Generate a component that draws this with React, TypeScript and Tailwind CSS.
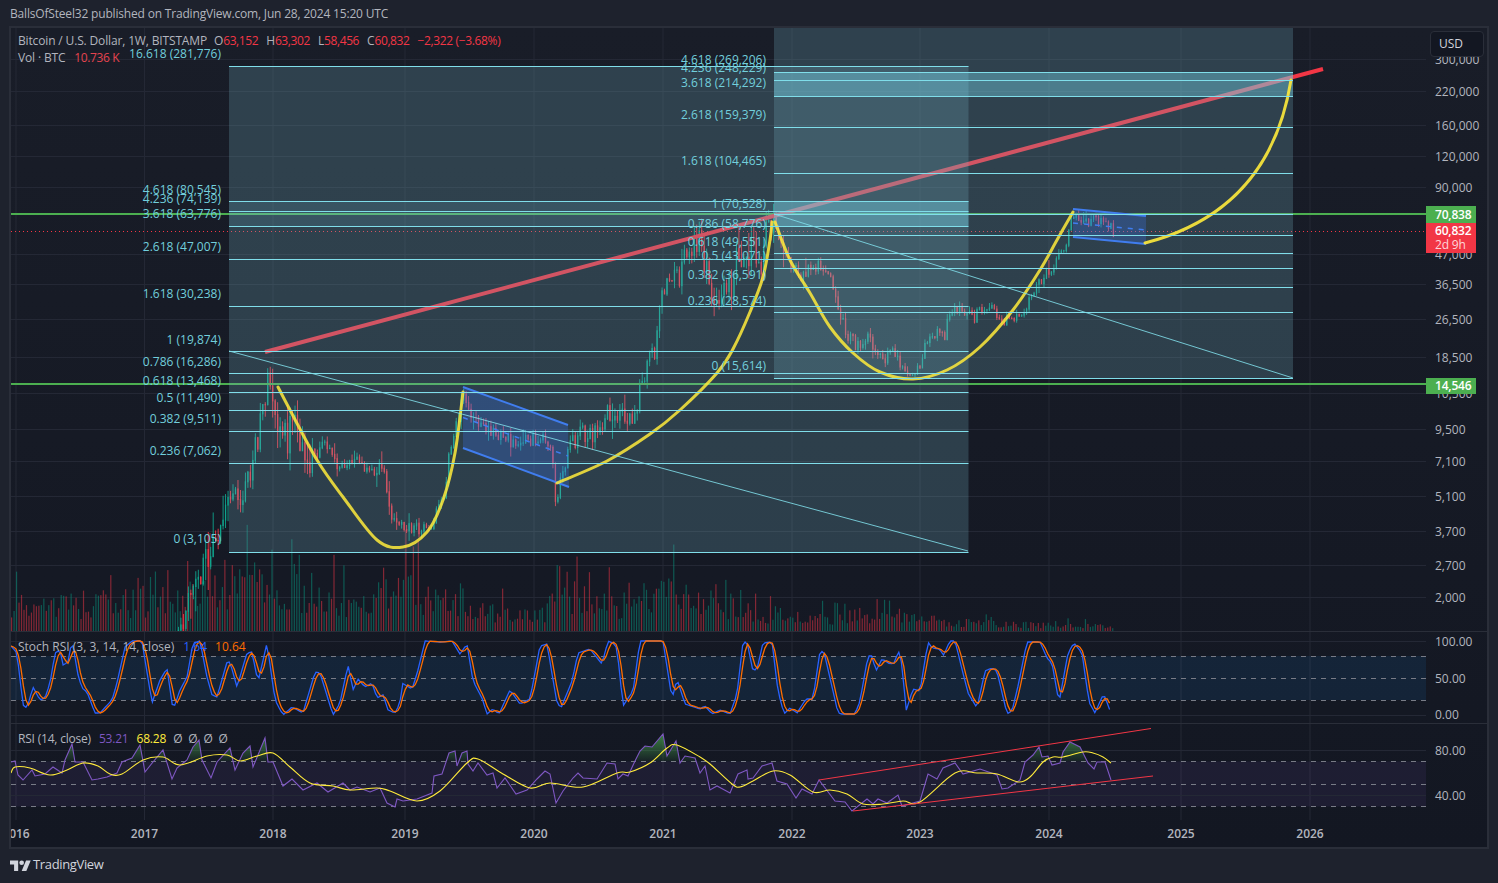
import React from "react";

type P = [number, number];

const pricePath: P[] = [
  [175,640],[190,600],[205,560],[223,515],[235,500],[243,490],[257,443],[263,407],[268,358],[273,400],[283,440],[292,425],[300,445],[310,460],[316,455],[325,438],[330,450],[340,470],[355,462],[365,468],[380,470],[385,478],[390,520],[400,525],[410,528],[420,528],[430,525],[437,510],[445,490],[448,457],[455,430],[463,395],[470,420],[480,425],[490,430],[500,435],[517,447],[533,437],[545,435],[552,450],[556,510],[560,480],[567,453],[577,433],[590,435],[600,430],[607,413],[615,410],[630,418],[636,405],[640,383],[645,375],[650,355],[655,352],[660,303],[665,285],[670,270],[675,280],[680,275],[685,250],[690,240],[700,240],[705,260],[713,293],[722,295],[732,290],[735,265],[745,250],[755,250],[760,265],[765,232],[772,222],[785,250],[795,270],[800,275],[810,268],[820,263],[830,275],[835,290],[838,310],[843,325],[848,335],[855,345],[867,333],[870,340],[875,350],[885,357],[895,352],[903,370],[913,372],[920,368],[925,340],[935,332],[945,335],[947,320],[955,307],[965,312],[975,318],[980,307],[990,306],[1000,320],[1015,318],[1025,310],[1030,295],[1037,285],[1047,270],[1055,265],[1062,250],[1068,235],[1072,212],[1080,225],[1090,220],[1100,220],[1110,225],[1113,232],
];

const stochBlue: P[] = [
  [11,646],[17,653],[23,705],[27,708],[33,687],[40,700],[45,698],[50,683],[55,653],[60,650],[63,665],[68,662],[72,640],[78,675],[82,688],[87,692],[95,713],[100,713],[112,700],[117,683],[125,647],[132,641],[142,641],[145,660],[152,703],[160,680],[167,668],[173,710],[180,690],[187,677],[193,643],[200,641],[207,677],[212,695],[217,697],[227,662],[230,662],[237,687],[247,653],[252,652],[258,682],[267,643],[275,700],[283,715],[292,707],[303,713],[315,672],[320,673],[333,715],[340,703],[348,665],[353,690],[358,679],[365,687],[372,683],[377,698],[383,695],[388,710],[395,713],[400,703],[402,683],[412,689],[417,674],[425,641],[440,642],[452,641],[460,654],[467,644],[473,681],[482,698],[487,714],[493,709],[499,714],[510,690],[520,704],[530,699],[540,646],[547,644],[557,703],[561,708],[572,681],[578,653],[590,649],[602,664],[608,641],[613,643],[617,648],[623,706],[633,691],[640,641],[663,641],[672,699],[677,679],[685,704],[700,709],[705,706],[712,714],[720,710],[730,714],[737,694],[743,642],[747,642],[753,671],[757,669],[763,643],[772,642],[778,691],[784,714],[790,708],[797,713],[806,699],[813,699],[820,651],[824,652],[838,713],[842,714],[855,714],[860,701],[868,656],[872,656],[876,671],[882,659],[890,664],[895,663],[898,649],[902,664],[906,711],[913,689],[920,691],[928,642],[932,648],[940,649],[943,656],[950,641],[955,641],[968,693],[977,708],[985,671],[992,668],[997,671],[1007,714],[1012,711],[1018,686],[1027,642],[1040,642],[1047,658],[1052,663],[1059,703],[1068,653],[1074,643],[1082,653],[1089,702],[1095,713],[1102,697],[1104,695],[1111,713],
];

const rsiLine: P[] = [
  [11,762],[15,761],[18,775],[23,780],[32,770],[35,776],[45,774],[53,767],[62,773],[65,760],[72,744],[75,762],[83,762],[92,780],[98,779],[107,777],[117,773],[122,762],[132,758],[140,745],[145,772],[153,762],[163,750],[172,779],[177,768],[187,760],[193,747],[199,740],[202,760],[211,778],[217,762],[230,748],[235,770],[243,753],[250,746],[253,767],[265,738],[268,762],[273,762],[283,786],[292,779],[303,790],[317,783],[328,792],[343,783],[350,790],[357,787],[370,792],[380,788],[387,803],[395,807],[397,799],[403,801],[417,799],[432,793],[434,776],[442,774],[449,753],[455,751],[457,766],[462,753],[467,751],[468,764],[473,771],[478,763],[487,775],[493,773],[497,788],[505,778],[516,794],[527,790],[537,779],[545,771],[550,774],[556,803],[563,791],[573,778],[578,773],[583,778],[597,779],[607,763],[615,764],[618,779],[623,774],[628,776],[635,761],[640,751],[645,746],[652,747],[663,734],[667,756],[676,741],[680,763],[685,756],[695,758],[700,773],[705,766],[710,790],[717,786],[730,793],[738,774],[747,770],[748,779],[753,778],[762,766],[772,763],[777,781],[787,784],[796,798],[802,789],[812,794],[819,780],[835,801],[845,802],[852,811],[867,799],[873,804],[878,799],[887,803],[898,795],[902,806],[920,801],[928,774],[937,779],[943,768],[955,763],[963,774],[980,769],[997,775],[1002,789],[1008,788],[1020,780],[1025,762],[1033,755],[1039,747],[1042,757],[1048,756],[1052,765],[1060,763],[1063,752],[1070,742],[1080,747],[1088,763],[1094,769],[1097,762],[1105,762],[1111,780],
];

const rsiMa: P[] = [
  [11,773],[15,767],[30,768],[50,775],[67,770],[83,763],[98,766],[110,774],[122,774],[143,760],[163,757],[180,765],[207,756],[227,755],[240,761],[257,756],[273,753],[290,767],[310,783],[333,786],[350,790],[377,788],[390,791],[417,801],[440,791],[467,763],[478,759],[503,774],[530,788],[550,783],[583,787],[617,773],[630,772],[650,763],[667,748],[677,745],[700,757],[710,764],[732,784],[740,787],[753,781],[773,771],[790,775],[813,792],[830,790],[847,794],[863,804],[883,804],[903,801],[920,802],[955,773],[977,773],[997,774],[1018,782],[1030,777],[1043,762],[1053,757],[1063,757],[1083,752],[1093,753],[1103,757],[1111,763],
];

const arc1: P[] = [[278,387],[290,410],[317,460],[343,497],[377,540],[403,547],[427,532],[443,500],[455,453],[463,392]];
const arc2: P[] = [[557,483],[607,461],[650,434],[680,410],[717,373],[733,349],[750,312],[763,277],[770,240],[772,222]];
const arc3: P[] = [[775,222],[790,260],[810,293],[830,327],[853,353],[880,372],[913,379],[947,370],[980,347],[1013,310],[1040,270],[1057,240],[1073,212]];

function smooth(points: P[]): string {
  let d = `M${points[0][0]} ${points[0][1]}`;
  for (let i = 0; i < points.length - 1; i++) {
    const p0 = points[Math.max(0, i - 1)];
    const p1 = points[i];
    const p2 = points[i + 1];
    const p3 = points[Math.min(points.length - 1, i + 2)];
    const c1x = p1[0] + (p2[0] - p0[0]) / 6;
    const c1y = p1[1] + (p2[1] - p0[1]) / 6;
    const c2x = p2[0] - (p3[0] - p1[0]) / 6;
    const c2y = p2[1] - (p3[1] - p1[1]) / 6;
    d += ` C${c1x.toFixed(1)} ${c1y.toFixed(1)} ${c2x.toFixed(1)} ${c2y.toFixed(1)} ${p2[0]} ${p2[1]}`;
  }
  return d;
}

function interp(points: P[], x: number): number {
  if (x <= points[0][0]) return points[0][1];
  for (let i = 0; i < points.length - 1; i++) {
    if (x <= points[i + 1][0]) {
      const t = (x - points[i][0]) / (points[i + 1][0] - points[i][0] || 1);
      return points[i][1] + t * (points[i + 1][1] - points[i][1]);
    }
  }
  return points[points.length - 1][1];
}

function poly(points: P[]): string {
  return points.map((p) => `${p[0].toFixed(1)},${p[1].toFixed(1)}`).join(" ");
}

function makeRng(seed: number) {
  let s = seed;
  return () => {
    s = (s * 16807) % 2147483647;
    return (s - 1) / 2147483646;
  };
}

const STEP = 2.48;

function candleVol(x: number): number {
  if (x < 262) return 26;
  if (x < 312) return 42;
  if (x < 385) return 13;
  if (x < 460) return 11;
  if (x < 570) return 14;
  if (x < 690) return 20;
  if (x < 772) return 32;
  if (x < 880) return 15;
  if (x < 1000) return 11;
  return 10;
}

function makeCandles() {
  const rnd = makeRng(20240628);
  const out: { x: number; top: number; bottom: number; o: number; c: number; up: boolean }[] = [];
  let prev = interp(pricePath, 175);
  for (let x = 178; x < 1114; x += STEP) {
    const vol = candleVol(x);
    const o = prev;
    const c = interp(pricePath, x) + (rnd() - 0.5) * vol;
    prev = c;
    const big = rnd() > 0.88 ? 2.2 : 1;
    out.push({
      x,
      o,
      c,
      up: c < o,
      top: Math.min(o, c) - rnd() * vol * 0.45 * big,
      bottom: Math.max(o, c) + rnd() * vol * 0.45 * big,
    });
  }
  return out;
}

const volEnv: P[] = [[11,50],[100,45],[180,60],[215,75],[265,85],[300,65],[350,50],[400,75],[440,55],[480,35],[545,30],[558,90],[580,50],[640,45],[663,70],[700,45],[780,25],[850,25],[900,22],[1000,12],[1113,8]];

function makeVolumes() {
  const rnd = makeRng(771133);
  const out: { x: number; h: number; up: boolean }[] = [];
  for (let x = 11; x < 1113; x += STEP) {
    const e = interp(volEnv, x);
    const r = rnd();
    const h = e * (0.25 + 0.6 * r + (rnd() > 0.88 ? 0.55 : 0));
    out.push({ x, h, up: rnd() > 0.48 });
  }
  return out;
}

function weekly(points: P[]): P[] {
  const out: P[] = [];
  for (let x = points[0][0]; x <= points[points.length - 1][0]; x += STEP) out.push([x, interp(points, x)]);
  return out;
}

function sma(points: P[]): P[] {
  return points.map((p, i) => {
    const a = points[Math.max(0, i - 2)][1];
    const b = points[Math.max(0, i - 1)][1];
    return [p[0], (a + b + p[1]) / 3] as P;
  });
}

const years = [16, 144.5, 273, 405, 534, 663, 792, 920, 1049, 1181, 1310];
const yearLabels = ["2016", "2017", "2018", "2019", "2020", "2021", "2022", "2023", "2024", "2025", "2026"];

const mainTicks: [number, string][] = [
  [59,"300,000"],[91,"220,000"],[125,"160,000"],[156,"120,000"],[187,"90,000"],[254,"47,000"],[284,"36,500"],[319,"26,500"],[357,"18,500"],[393,"10,500"],[429,"9,500"],[461,"7,100"],[496,"5,100"],[531,"3,700"],[565,"2,700"],[597,"2,000"],
];

const leftFib: [number, string][] = [
  [53,"16.618 (281,776)"],[189,"4.618 (80,545)"],[198,"4.236 (74,139)"],[213,"3.618 (63,776)"],[246,"2.618 (47,007)"],[293,"1.618 (30,238)"],[339,"1 (19,874)"],[361,"0.786 (16,286)"],[380,"0.618 (13,468)"],[397,"0.5 (11,490)"],[418,"0.382 (9,511)"],[450,"0.236 (7,062)"],[538,"0 (3,105)"],
];
const rightFib: [number, string][] = [
  [59,"4.618 (269,206)"],[67,"4.236 (248,229)"],[82,"3.618 (214,292)"],[114,"2.618 (159,379)"],[160,"1.618 (104,465)"],[203,"1 (70,528)"],[223,"0.786 (58,776)"],[241,"0.618 (49,551)"],[255,"0.5 (43,071)"],[274,"0.382 (36,591)"],[300,"0.236 (28,574)"],[365,"0 (15,614)"],
];

const leftLines = [66,201,211,226,259,306,351,373,392,410,431,463,552];
const rightLines = [72,80,96,127,173,214,235,253,268,287,312,378];

function VGrid({ y1, y2 }: { y1: number; y2: number }) {
  return (
    <>
      {years.map((x) => (
        <line key={x} x1={x} x2={x} y1={y1} y2={y2} stroke="#242835" strokeWidth="1" />
      ))}
    </>
  );
}

function HGrid({ ys }: { ys: number[] }) {
  return (
    <>
      {ys.map((y) => (
        <line key={y} x1="11" x2="1426" y1={y + 0.5} y2={y + 0.5} stroke="#242835" strokeWidth="1" />
      ))}
    </>
  );
}

function Dashed({ ys }: { ys: number[] }) {
  return (
    <>
      {ys.map((y) => (
        <line key={y} x1="11" x2="1426" y1={y} y2={y} stroke="#787b86" strokeWidth="1" strokeDasharray="5 5" />
      ))}
    </>
  );
}

function Channel({ a, b, c, d }: { a: P; b: P; c: P; d: P }) {
  return (
    <>
      <polygon points={poly([a, b, d, c])} fill="#2962ff" fillOpacity="0.28" />
      <line x1={a[0]} y1={a[1]} x2={b[0]} y2={b[1]} stroke="#2f6dff" strokeWidth="2" />
      <line x1={c[0]} y1={c[1]} x2={d[0]} y2={d[1]} stroke="#2f6dff" strokeWidth="2" />
      <line
        x1={a[0]}
        y1={(a[1] + c[1]) / 2}
        x2={b[0]}
        y2={(b[1] + d[1]) / 2}
        stroke="#2f6dff"
        strokeWidth="1.5"
        strokeDasharray="5 6"
      />
    </>
  );
}

function MainChart() {
  const candles = makeCandles();
  const vols = makeVolumes();
  return (
    <svg className="block w-full h-full" viewBox="11 28 1415 603" preserveAspectRatio="none">
      <VGrid y1={28} y2={631} />
      <HGrid ys={mainTicks.map((t) => t[0])} />
      {vols.map((v, i) => (
        <rect key={i} x={v.x} y={631 - v.h} width="1.2" height={v.h} fill={v.up ? "#089981" : "#f23645"} fillOpacity="0.5" />
      ))}
      {candles.map((c, i) => (
        <g key={i} fill={c.up ? "#0fa38c" : "#f23645"}>
          <rect x={c.x} y={c.top} width="0.9" height={c.bottom - c.top} />
          <rect x={c.x - 0.2} y={Math.min(c.o, c.c)} width="1.3" height={Math.abs(c.o - c.c) + 1} />
        </g>
      ))}
      <line x1="11" x2="1426" y1="231.5" y2="231.5" stroke="#f23645" strokeWidth="1" strokeDasharray="1 3" />
      <line x1="11" x2="1426" y1="214" y2="214" stroke="#4caf50" strokeWidth="2" />
      <line x1="11" x2="1426" y1="384" y2="384" stroke="#4caf50" strokeWidth="2" />
      <line x1="265" y1="352" x2="1323" y2="69" stroke="#f23645" strokeWidth="4" />
      <Channel a={[463, 387]} b={[568, 425]} c={[463, 448]} d={[569, 487]} />
      <Channel a={[1073, 209]} b={[1146, 216]} c={[1073, 237]} d={[1146, 244]} />
      <rect x="229" y="66" width="739.5" height="486" fill="rgb(117,177,192)" fillOpacity="0.25" />
      <rect x="774" y="28" width="519" height="350" fill="rgb(117,177,192)" fillOpacity="0.25" />
      <rect x="229" y="201" width="545" height="25" fill="rgb(120,220,240)" fillOpacity="0.13" />
      <rect x="774" y="201" width="194.5" height="25" fill="rgb(120,220,240)" fillOpacity="0.39" />
      <rect x="774" y="72" width="519" height="24" fill="rgb(120,220,240)" fillOpacity="0.39" />
      {[arc1, arc2, arc3].map((a, i) => (
        <path key={i} d={smooth(a)} fill="none" stroke="#ffeb3b" strokeOpacity="0.85" strokeWidth="3" strokeLinecap="round" />
      ))}
      <path d="M1145 243 C1215 225 1275 180 1291 80" fill="none" stroke="#ffeb3b" strokeOpacity="0.9" strokeWidth="3" strokeLinecap="round" />
      {leftLines.map((y) => (
        <line key={y} x1="229" x2="968.5" y1={y + 0.5} y2={y + 0.5} stroke="#80deea" strokeWidth="1" />
      ))}
      {rightLines.map((y) => (
        <line key={y} x1="774" x2="1293" y1={y + 0.5} y2={y + 0.5} stroke="#80deea" strokeWidth="1" />
      ))}
      <line x1="229" y1="351" x2="968" y2="551" stroke="#80deea" strokeWidth="1" strokeOpacity="0.85" />
      <line x1="774" y1="214" x2="1293" y2="378" stroke="#80deea" strokeWidth="1" strokeOpacity="0.85" />
      <g fill="#72cfdc" fontSize="12">
        {leftFib.map(([y, t]) => (
          <text key={t} x="221" y={y + 5} textAnchor="end">
            {t}
          </text>
        ))}
        {rightFib.map(([y, t]) => (
          <text key={t} x="766" y={y + 5} textAnchor="end">
            {t}
          </text>
        ))}
      </g>
    </svg>
  );
}

function StochChart() {
  const blue = weekly(stochBlue);
  const orange = sma(blue);
  return (
    <svg className="block w-full h-full" viewBox="11 632 1415 91" preserveAspectRatio="none">
      <VGrid y1={632} y2={723} />
      <rect x="11" y="656" width="1415" height="44" fill="#2196f3" fillOpacity="0.1" />
      <HGrid ys={[641, 715]} />
      <Dashed ys={[656.5, 678.5, 700.5]} />
      <polyline points={poly(blue)} fill="none" stroke="#2962ff" strokeWidth="1.3" />
      <polyline points={poly(orange)} fill="none" stroke="#ff6d00" strokeWidth="1.3" />
    </svg>
  );
}

function RsiChart() {
  const area = `${rsiLine[0][0]},761.5 ${poly(rsiLine)} ${rsiLine[rsiLine.length - 1][0]},761.5`;
  return (
    <svg className="block w-full h-full" viewBox="11 724 1415 96" preserveAspectRatio="none">
      <defs>
        <linearGradient id="rsiUp" x1="0" x2="0" y1="734" y2="762" gradientUnits="userSpaceOnUse">
          <stop offset="0" stopColor="#4caf50" stopOpacity="0.7" />
          <stop offset="1" stopColor="#4caf50" stopOpacity="0.05" />
        </linearGradient>
        <clipPath id="rsiClip">
          <rect x="11" y="724" width="1415" height="37.5" />
        </clipPath>
      </defs>
      <VGrid y1={724} y2={820} />
      <rect x="11" y="761.5" width="1415" height="45" fill="#7e57c2" fillOpacity="0.1" />
      <HGrid ys={[750, 795]} />
      <Dashed ys={[761.5, 784.5, 806.5]} />
      <polygon points={area} fill="url(#rsiUp)" clipPath="url(#rsiClip)" />
      <polyline points={poly(rsiLine)} fill="none" stroke="#7e57c2" strokeWidth="1.1" />
      <path d={smooth(rsiMa)} fill="none" stroke="#ffeb3b" strokeWidth="1.1" />
      <line x1="819" y1="780" x2="1151" y2="728.5" stroke="#f23645" strokeWidth="1" />
      <line x1="853" y1="811" x2="1153" y2="776" stroke="#f23645" strokeWidth="1" />
    </svg>
  );
}

function AxisLabels({ ticks, top }: { ticks: [number, string][]; top: number }) {
  return (
    <>
      {ticks.map(([y, t]) => (
        <div
          key={t}
          className="absolute left-[9px] -translate-y-1/2 text-[12px] leading-none text-[#b2b5be] whitespace-nowrap"
          style={{ top: y - top + 1 }}
        >
          {t}
        </div>
      ))}
    </>
  );
}

function Logo() {
  return (
    <svg className="w-[21px] h-[13px]" viewBox="0 0 36 22" fill="#d1d4dc" aria-hidden="true">
      <path d="M14 22H7V11H0V4h14v18zM28 22h-8l7.5-18h8L28 22z" />
      <circle cx="20" cy="8" r="4" />
    </svg>
  );
}

export default function App() {
  return (
    <div className="w-[1498px] h-[883px] overflow-hidden bg-[#1e222d] flex flex-col font-['Open_Sans','Noto_Sans',sans-serif] text-[12px] text-[#b2b5be]">
      <div className="h-[26px] shrink-0 pl-[10px] pt-[2px] flex items-center whitespace-nowrap tracking-[-0.18px]">
        BallsOfSteel32 published on TradingView.com, Jun 28, 2024 15:20 UTC
      </div>
      <div className="ml-[9px] w-[1480px] h-[823px] shrink-0 border-2 border-[#2a2e39] bg-gradient-to-b from-[#191d28] to-[#131722] flex flex-col overflow-hidden">
        <div className="h-[604px] shrink-0 flex border-b border-[#2a2e39]">
          <div className="relative flex-1 min-w-0">
            <MainChart />
            <div className="absolute left-[7px] top-[4px] leading-[17px] whitespace-nowrap tracking-[-0.15px]">
              <div className="flex">
                <span>Bitcoin / U.S. Dollar, 1W, BITSTAMP</span>
                <span className="ml-[7px]">O</span>
                <span className="text-[#f23645] tracking-[-0.4px]">63,152</span>
                <span className="ml-[8px]">H</span>
                <span className="text-[#f23645] tracking-[-0.4px]">63,302</span>
                <span className="ml-[8px]">L</span>
                <span className="text-[#f23645] tracking-[-0.4px]">58,456</span>
                <span className="ml-[8px]">C</span>
                <span className="text-[#f23645] tracking-[-0.4px]">60,832</span>
                <span className="ml-[8px] text-[#f23645] tracking-[-0.35px]">−2,322 (−3.68%)</span>
              </div>
              <div className="flex">
                <span>Vol · BTC</span>
                <span className="ml-[9px] text-[#e5444f] tracking-[-0.4px]">10.736 K</span>
              </div>
            </div>
          </div>
          <div className="relative w-[61px] shrink-0 overflow-hidden">
            <AxisLabels ticks={mainTicks} top={28} />
            <div className="absolute left-[4px] top-[3px] w-[54px] h-[26px] rounded-[4px] border border-[#2a2e39] bg-[#131722] pl-[8px] flex items-center text-[#d1d4dc]">
              USD
            </div>
            <div className="absolute left-0 top-[178px] w-[50px] h-[17px] bg-[#4caf50] pl-[9px] flex items-center text-white font-semibold tracking-[-0.2px]">
              70,838
            </div>
            <div className="absolute left-0 top-[195px] w-[50px] h-[30px] bg-[#f23645] pl-[9px] leading-[14px] text-white pt-px tracking-[-0.2px]">
              <div className="font-semibold">60,832</div>
              <div className="text-[#ffd5d9]">2d 9h</div>
            </div>
            <div className="absolute left-0 top-[350px] w-[50px] h-[16px] bg-[#4caf50] pl-[9px] flex items-center text-white font-semibold tracking-[-0.2px]">
              14,546
            </div>
          </div>
        </div>
        <div className="h-[92px] shrink-0 flex border-b border-[#2a2e39]">
          <div className="relative flex-1 min-w-0">
            <StochChart />
            <div className="absolute left-[7px] top-[6px] leading-[17px] flex whitespace-nowrap">
              <span>Stoch RSI (3, 3, 14, 14, close)</span>
              <span className="ml-[9px] text-[#2962ff]">1.64</span>
              <span className="ml-[8px] text-[#ff6d00]">10.64</span>
            </div>
          </div>
          <div className="relative w-[61px] shrink-0">
            <AxisLabels
              ticks={[
                [641, "100.00"],
                [678, "50.00"],
                [714, "0.00"],
              ]}
              top={632}
            />
          </div>
        </div>
        <div className="h-[96px] shrink-0 flex">
          <div className="relative flex-1 min-w-0">
            <RsiChart />
            <div className="absolute left-[7px] top-[6px] leading-[17px] flex whitespace-nowrap tracking-[-0.2px]">
              <span>RSI (14, close)</span>
              <span className="ml-[8px] text-[#7e57c2]">53.21</span>
              <span className="ml-[8px] text-[#ffeb3b]">68.28</span>
              <span className="ml-[7px]">Ø</span>
              <span className="ml-[6px]">Ø</span>
              <span className="ml-[6px]">Ø</span>
              <span className="ml-[6px]">Ø</span>
            </div>
          </div>
          <div className="relative w-[61px] shrink-0">
            <AxisLabels
              ticks={[
                [750, "80.00"],
                [795, "40.00"],
              ]}
              top={724}
            />
          </div>
        </div>
        <div className="relative flex-1 overflow-hidden">
          {yearLabels.map((t, i) => (
            <div
              key={t}
              className="absolute top-[14px] -translate-x-1/2 -translate-y-1/2 leading-none font-semibold text-[#b2b5be]"
              style={{ left: years[i] - 11 }}
            >
              {t}
            </div>
          ))}
        </div>
      </div>
      <div className="flex-1 pl-[10px] pb-[3px] flex items-center gap-[2px] text-[13px] tracking-[-0.35px] text-[#d1d4dc]">
        <Logo />
        <span>TradingView</span>
      </div>
    </div>
  );
}
